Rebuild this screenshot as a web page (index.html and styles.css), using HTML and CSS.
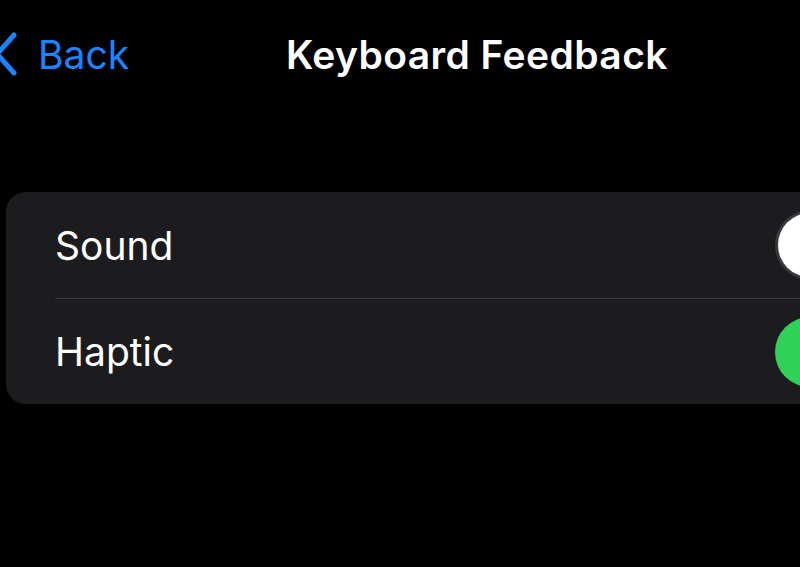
FILE: index.html
```html
<!doctype html>
<html lang="en">
<head>
	<meta charset="UTF-8">
	<title>Keyboard Feedback</title>
<link rel="stylesheet" href="styles.css">
</head>
<body>
<div class="screen">
	<div class="navbar">
		<a class="back" href="#">
			<svg class="chevron" width="18" height="48" viewBox="0 0 18 48">
				<path d="M14 5 L-3 24 L14 43" fill="none" stroke="#1a84ff" stroke-width="5" stroke-linecap="round" stroke-linejoin="round"/>
			</svg>
			<span>Back</span>
		</a>
		<span class="title">Keyboard Feedback</span>
	</div>
	<ul class="group">
		<li class="row">
			<span class="label">Sound</span>
			<span class="toggle"><span class="knob"></span></span>
		</li>
		<li class="row">
			<span class="label">Haptic</span>
			<span class="toggle on"><span class="knob"></span></span>
		</li>
	</ul>
</div>
</body>
</html>
```

FILE: styles.css
```css
*{
	margin:0;
	padding:0;
	box-sizing:border-box;
}
body{
	background:#000;
	color:#fff;
	font-family:Inter, "Noto Sans", sans-serif;
	overflow:hidden;
}
.screen{
	width:800px;
	height:567px;
	overflow:hidden;
}
.navbar{
	height:108px;
	display:flex;
	align-items:center;
}
.back{
	display:flex;
	align-items:center;
	gap:20px;
	color:#1a84ff;
	text-decoration:none;
	font-size:39px;
	width:286px;
}
.chevron{
	flex:none;
}
.title{
	font-size:39px;
	font-weight:600;
	letter-spacing:0.4px;
}
.group{
	list-style:none;
	margin:84px 0 0 6px;
	width:900px;
	background:#1c1c1e;
	border-radius:20px;
	padding-left:49px;
}
.row{
	height:106px;
	display:flex;
	align-items:center;
}
.row + .row{
	border-top:1.5px solid #38383a;
}
.label{
	font-size:39px;
	width:720px;
	flex:none;
}
.toggle{
	width:118px;
	height:70px;
	border-radius:35px;
	background:#39393d;
	padding:3px;
	display:flex;
	flex:none;
}
.knob{
	width:64px;
	height:64px;
	border-radius:50%;
	background:#fff;
}
.toggle.on{
	background:#30d158;
	justify-content:flex-end;
}
```
